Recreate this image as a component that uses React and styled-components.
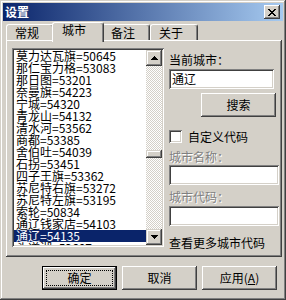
import React from 'react';
import styled, { createGlobalStyle } from 'styled-components';

const FACE = '#d4d0c8';

const cities = [
  '莫力达瓦旗=50645',
  '那仁宝力格=53083',
  '那日图=53201',
  '奈曼旗=54223',
  '宁城=54320',
  '青龙山=54132',
  '清水河=53562',
  '商都=53385',
  '舍伯吐=54039',
  '石拐=53451',
  '四子王旗=53362',
  '苏尼特右旗=53272',
  '苏尼特左旗=53195',
  '索轮=50834',
  '通辽钱家店=54103',
  '通辽=54135',
  '头道湖=52607',
];
const SELECTED = 15;
const tabs = ['常规', '城市', '备注', '关于'];

const App = () => {
  return (
    <>
      <GlobalStyle />
      <Window>
        <TitleBar>
          <Title>设置</Title>
          <CloseButton>
            <svg width="8" height="7" viewBox="0 0 8 7" shapeRendering="crispEdges">
              <path
                d="M0 0h2v1H0zM6 0h2v1H6zM1 1h2v1H1zM5 1h2v1H5zM2 2h4v1H2zM3 3h2v1H3zM2 4h4v1H2zM1 5h2v1H1zM5 5h2v1H5zM0 6h2v1H0zM6 6h2v1H6z"
                fill="#000"
              />
            </svg>
          </CloseButton>
        </TitleBar>
        <Body>
          <TabRow>
            {tabs.map((t, i) => (
              <Tab key={t} $active={i === 1}>
                {t}
              </Tab>
            ))}
          </TabRow>
          <Panel>
            <ListBox>
              <Rows>
                {cities.map((c, i) => (
                  <Row key={c} $selected={i === SELECTED}>
                    {c}
                  </Row>
                ))}
              </Rows>
              <ScrollBar>
                <ScrollButton>
                  <svg width="7" height="4" viewBox="0 0 7 4" shapeRendering="crispEdges">
                    <path d="M3 0h1v1H3zM2 1h3v1H2zM1 2h5v1H1zM0 3h7v1H0z" fill="#000" />
                  </svg>
                </ScrollButton>
                <Track $offset={84}>
                  <Thumb />
                </Track>
                <ScrollButton>
                  <svg width="7" height="4" viewBox="0 0 7 4" shapeRendering="crispEdges">
                    <path d="M0 0h7v1H0zM1 1h5v1H1zM2 2h3v1H2zM3 3h1v1H3z" fill="#000" />
                  </svg>
                </ScrollButton>
              </ScrollBar>
            </ListBox>
            <Side>
              <Label $top={6}>当前城市：</Label>
              <Field $top={3} $width={105}>通辽</Field>
              <PushButton $search>搜索</PushButton>
              <CheckRow>
                <CheckBox />
                <span>自定义代码</span>
              </CheckRow>
              <Label $top={8} $disabled>城市名称：</Label>
              <Field $top={2} $width={110} />
              <Label $top={6} $disabled>城市代码：</Label>
              <Field $top={3} $width={110} />
              <Label $top={11}>查看更多城市代码</Label>
            </Side>
          </Panel>
          <ButtonRow>
            <PushButton $default>
              <span>确定</span>
            </PushButton>
            <PushButton>取消</PushButton>
            <PushButton>
              应用(<u>A</u>)
            </PushButton>
          </ButtonRow>
        </Body>
      </Window>
    </>
  );
};

const GlobalStyle = createGlobalStyle`
* {
  margin: 0;
  padding: 0;
  box-sizing: border-box;
}

body {
  margin: 0;
  background: ${FACE};
  font-family: "Noto Sans CJK SC", "Liberation Sans", sans-serif;
  font-size: 12px;
  color: #000;
}
`;

const Window = styled.div`
  width: 286px;
  height: 300px;
  padding: 3px;
  background: ${FACE};
  box-shadow: inset -1px -1px #404040, inset 1px 1px ${FACE},
    inset -2px -2px #808080, inset 2px 2px #ffffff;
`;

const TitleBar = styled.div`
  height: 18px;
  display: flex;
  align-items: center;
  justify-content: space-between;
  padding: 0 3px 0 2px;
  background: linear-gradient(to right, #0a246a, #a6caf0);
`;

const Title = styled.div`
  color: #fff;
  font-weight: bold;
  font-size: 12px;
  line-height: 12px;
`;

const CloseButton = styled.div`
  width: 16px;
  height: 14px;
  display: flex;
  align-items: center;
  justify-content: center;
  background: ${FACE};
  box-shadow: inset -1px -1px #404040, inset 1px 1px #ffffff,
    inset -2px -2px #808080, inset 2px 2px ${FACE};
`;

const Body = styled.div`
  padding: 1px 1px 0 3px;
`;

const TabRow = styled.div`
  display: flex;
  align-items: flex-end;
  height: 18px;
`;

const Tab = styled.div`
  position: relative;
  z-index: ${(p) => (p.$active ? 2 : 1)};
  width: ${(p) => (p.$active ? 52 : 48)}px;
  height: ${(p) => (p.$active ? 20 : 16)}px;
  margin: ${(p) => (p.$active ? '0 -2px -2px' : '0')};
  padding: ${(p) => (p.$active ? '1px 0 0 9px' : '2px 0 0 8px')};
  line-height: 12px;
  background: ${FACE};
  border: 1px solid;
  border-color: #fff #404040 transparent #fff;
  border-bottom: none;
  border-radius: 3px 3px 0 0;
  box-shadow: inset -1px 0 #808080;
`;

const Panel = styled.div`
  display: flex;
  align-items: flex-start;
  height: 217px;
  padding: 8px 2px 0 6px;
  box-shadow: inset -1px -1px #404040, inset 1px 1px #ffffff,
    inset -2px -2px #808080, inset 2px 2px ${FACE};
`;

const sunken = `
  box-shadow: inset 1px 1px #808080, inset -1px -1px #ffffff,
    inset 2px 2px #404040, inset -2px -2px ${FACE};
`;

const ListBox = styled.div`
  width: 152px;
  height: 199px;
  padding: 2px;
  display: flex;
  background: #fff;
  ${sunken}
`;

const Rows = styled.div`
  flex: 1;
  overflow: hidden;
`;

const Row = styled.div`
  height: 12px;
  line-height: 12px;
  padding-left: 2px;
  white-space: nowrap;
  background: ${(p) => (p.$selected ? '#0a246a' : 'transparent')};
  color: ${(p) => (p.$selected ? '#fff' : '#000')};
`;

const ScrollBar = styled.div`
  width: 16px;
  display: flex;
  flex-direction: column;
`;

const ScrollButton = styled.div`
  width: 16px;
  height: 16px;
  display: flex;
  align-items: center;
  justify-content: center;
  background: ${FACE};
  box-shadow: inset -1px -1px #404040, inset 1px 1px ${FACE},
    inset -2px -2px #808080, inset 2px 2px #ffffff;
`;

const Track = styled.div`
  flex: 1;
  padding-top: ${(p) => p.$offset}px;
  background: repeating-conic-gradient(#ffffff 0 25%, ${FACE} 0 50%) 0 0 / 2px 2px;
`;

const Thumb = styled.div`
  width: 16px;
  height: 8px;
  background: ${FACE};
  box-shadow: inset -1px -1px #404040, inset 1px 1px ${FACE},
    inset -2px -2px #808080, inset 2px 2px #ffffff;
`;

const Side = styled.div`
  margin-left: 5px;
  width: 111px;
  display: flex;
  flex-direction: column;
`;

const Label = styled.div`
  margin-top: ${(p) => p.$top}px;
  line-height: 12px;
  white-space: nowrap;
  color: ${(p) => (p.$disabled ? '#808080' : '#000')};
  text-shadow: ${(p) => (p.$disabled ? '1px 1px #ffffff' : 'none')};
`;

const Field = styled.div`
  margin-top: ${(p) => p.$top}px;
  width: ${(p) => p.$width}px;
  height: 20px;
  padding: 4px 0 0 3px;
  line-height: 12px;
  background: #fff;
  ${sunken}
`;

const PushButton = styled.div`
  position: relative;
  width: 75px;
  height: 24px;
  display: flex;
  align-items: center;
  justify-content: center;
  line-height: 12px;
  background: ${FACE};
  align-self: ${(p) => (p.$search ? 'flex-end' : 'auto')};
  margin: ${(p) => (p.$search ? '4px 4px 0 0' : '0')};
  border: ${(p) => (p.$default ? '1px solid #000' : 'none')};
  box-shadow: inset -1px -1px #404040, inset 1px 1px #ffffff,
    inset -2px -2px #808080, inset 2px 2px ${FACE};

  u {
    text-decoration: underline;
  }

  &::after {
    content: '';
    display: ${(p) => (p.$default ? 'block' : 'none')};
    position: absolute;
    inset: 3px;
    border: 1px dotted #000;
  }
`;

const CheckRow = styled.div`
  margin-top: 13px;
  display: flex;
  align-items: center;
  gap: 6px;
  line-height: 12px;
`;

const CheckBox = styled.div`
  width: 13px;
  height: 13px;
  background: #fff;
  ${sunken}
`;

const ButtonRow = styled.div`
  display: flex;
  justify-content: flex-end;
  gap: 5px;
  margin-top: 9px;
  padding-right: 5px;
`;

export default App;
